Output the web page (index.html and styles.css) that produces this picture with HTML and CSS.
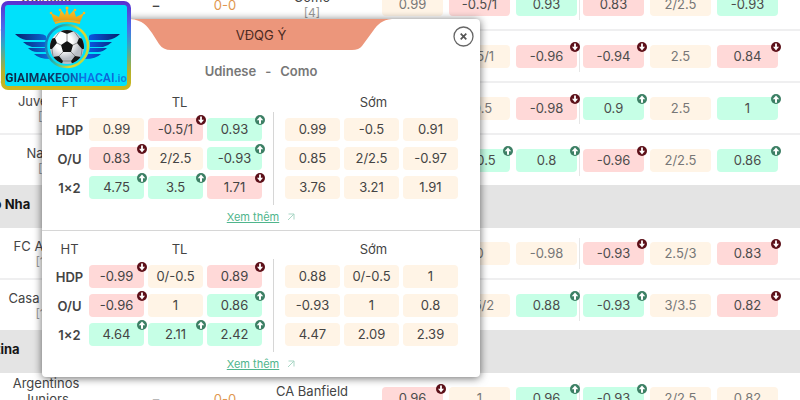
FILE: index.html
```html
<!DOCTYPE html>
<html lang="vi">
<head>
<meta charset="utf-8">
<title>VĐQG Ý</title>
<link rel="stylesheet" href="styles.css">
</head>
<body>
<svg class="defs" aria-hidden="true">
  <symbol id="down" viewBox="0 0 10 10"><circle cx="5" cy="5" r="5" fill="#5c1019"/><path d="M5 1.500V6" stroke="#fff" stroke-width="1.800"/><path d="M2 4.800H8L5 8.600Z" fill="#fff"/></symbol>
  <symbol id="up" viewBox="0 0 10 10"><circle cx="5" cy="5" r="5" fill="#3c7f64"/><path d="M5 8.700V4" stroke="#fff" stroke-width="2"/><path d="M1.700 5.200H8.300L5 1.400Z" fill="#fff"/></symbol>
  <symbol id="out" viewBox="0 0 8 8"><path d="M1 7L7 1M1.5 1H7V6.5" fill="none" stroke="#a9d6c5" stroke-width="1"/></symbol>
</svg>

<main class="board">
<table class="matches">
<tbody>
<tr class="match"><td class="team">Udinese<small>[9]</small></td><td class="time">–</td><td class="score">0-0</td><td class="team away">Como<small>[4]</small></td>
<td class="odd">0.99</td><td class="odd fall">-0.5/1</td><td class="odd rise">0.93</td><td class="odd fall half">0.83</td><td class="odd">2/2.5</td><td class="odd rise">-0.93</td></tr>
<tr class="match"><td class="team"></td><td class="time"></td><td class="score"></td><td class="team away"></td>
<td class="odd"></td><td class="odd">0.5/1</td><td class="odd fall">-0.96<svg><use href="#down"/></svg></td><td class="odd fall half">-0.94<svg><use href="#down"/></svg></td><td class="odd">2.5</td><td class="odd fall">0.84<svg><use href="#down"/></svg></td></tr>
<tr class="match"><td class="team">Juventus<small>[8]</small></td><td class="time"></td><td class="score"></td><td class="team away"></td>
<td class="odd"></td><td class="odd">-0.5</td><td class="odd fall">-0.98<svg><use href="#down"/></svg></td><td class="odd rise half">0.9<svg><use href="#up"/></svg></td><td class="odd">2.5</td><td class="odd rise">1<svg><use href="#up"/></svg></td></tr>
<tr class="match last"><td class="team">Napoli<small>[2]</small></td><td class="time"></td><td class="score"></td><td class="team away"></td>
<td class="odd"></td><td class="odd rise">0/0.5<svg><use href="#up"/></svg></td><td class="odd rise">0.8<svg><use href="#up"/></svg></td><td class="odd fall half">-0.96<svg><use href="#down"/></svg></td><td class="odd">2/2.5</td><td class="odd rise">0.86<svg><use href="#up"/></svg></td></tr>
<tr class="league"><th scope="rowgroup">Bồ Đào Nha</th></tr>
<tr class="match"><td class="team">FC Arouca<small>[16]</small></td><td class="time"></td><td class="score"></td><td class="team away"></td>
<td class="odd"></td><td class="odd">0</td><td class="odd">-0.98</td><td class="odd fall half">-0.93<svg><use href="#down"/></svg></td><td class="odd">2.5/3</td><td class="odd fall">0.83<svg><use href="#down"/></svg></td></tr>
<tr class="match last"><td class="team">Casa Pia AC<small>[10]</small></td><td class="time"></td><td class="score"></td><td class="team away"></td>
<td class="odd"></td><td class="odd">1.5/2</td><td class="odd rise">0.88<svg><use href="#up"/></svg></td><td class="odd rise half">-0.93<svg><use href="#up"/></svg></td><td class="odd">3/3.5</td><td class="odd fall">0.82<svg><use href="#down"/></svg></td></tr>
<tr class="league"><th scope="rowgroup">Argentina</th></tr>
<tr class="match"><td class="team">Argentinos Juniors<small>[3]</small></td><td class="time">–</td><td class="score">0-0</td><td class="team away">CA Banfield<small>[11]</small></td>
<td class="odd fall">0.96<svg><use href="#down"/></svg></td><td class="odd">1</td><td class="odd rise">0.96<svg><use href="#up"/></svg></td><td class="odd rise half">-0.93<svg><use href="#up"/></svg></td><td class="odd">2/2.5</td><td class="odd">0.82</td></tr>
</tbody>
</table>
</main>

<section class="popup" role="dialog" aria-labelledby="popup-title">
  <header class="popup-head">
    <svg class="tab" viewBox="0 0 262 32" preserveAspectRatio="none" aria-hidden="true"><path d="M0 0C13 1 17 7 22 14L29 25Q33 31 41 31H222Q229 31 232 27L243 12C248 5 252 1 262 0Z" fill="#ec967b"/></svg>
    <h1 id="popup-title">VĐQG Ý</h1>
    <button class="close" type="button" aria-label="Đóng"><svg viewBox="0 0 21 21"><circle cx="10.500" cy="10.500" r="9.500" fill="none" stroke="#666" stroke-width="1.300"/><path d="M7.700 7.700L13.300 13.300M13.300 7.700L7.700 13.300" stroke="#555" stroke-width="1.700"/></svg></button>
  </header>
  <p class="teams"><span>Udinese</span><span>-</span><span>Como</span></p>

  <section class="period">
    <div class="tables">
      <table class="now">
        <thead><tr><th class="label">FT</th><th class="group" colspan="3">TL</th></tr></thead>
        <tbody>
        <tr><th scope="row">HDP</th><td class="odd">0.99</td><td class="odd fall">-0.5/1<svg><use href="#down"/></svg></td><td class="odd rise">0.93<svg><use href="#up"/></svg></td></tr>
        <tr><th scope="row">O/U</th><td class="odd fall">0.83<svg><use href="#down"/></svg></td><td class="odd">2/2.5</td><td class="odd rise">-0.93<svg><use href="#up"/></svg></td></tr>
        <tr><th scope="row">1×2</th><td class="odd rise">4.75<svg><use href="#up"/></svg></td><td class="odd rise">3.5<svg><use href="#up"/></svg></td><td class="odd fall">1.71<svg><use href="#down"/></svg></td></tr>
        </tbody>
      </table>
      <div class="rule"></div>
      <table class="early">
        <thead><tr><th class="group" colspan="3">Sớm</th></tr></thead>
        <tbody>
        <tr><td class="odd">0.99</td><td class="odd">-0.5</td><td class="odd">0.91</td></tr>
        <tr><td class="odd">0.85</td><td class="odd">2/2.5</td><td class="odd">-0.97</td></tr>
        <tr><td class="odd">3.76</td><td class="odd">3.21</td><td class="odd">1.91</td></tr>
        </tbody>
      </table>
    </div>
    <div class="more"><a href="#ft">Xem thêm</a><svg><use href="#out"/></svg></div>
  </section>

  <section class="period">
    <div class="tables">
      <table class="now">
        <thead><tr><th class="label">HT</th><th class="group" colspan="3">TL</th></tr></thead>
        <tbody>
        <tr><th scope="row">HDP</th><td class="odd fall">-0.99<svg><use href="#down"/></svg></td><td class="odd">0/-0.5</td><td class="odd fall">0.89<svg><use href="#down"/></svg></td></tr>
        <tr><th scope="row">O/U</th><td class="odd fall">-0.96<svg><use href="#down"/></svg></td><td class="odd">1</td><td class="odd rise">0.86<svg><use href="#up"/></svg></td></tr>
        <tr><th scope="row">1×2</th><td class="odd rise">4.64<svg><use href="#up"/></svg></td><td class="odd rise">2.11<svg><use href="#up"/></svg></td><td class="odd rise">2.42<svg><use href="#up"/></svg></td></tr>
        </tbody>
      </table>
      <div class="rule"></div>
      <table class="early">
        <thead><tr><th class="group" colspan="3">Sớm</th></tr></thead>
        <tbody>
        <tr><td class="odd">0.88</td><td class="odd">0/-0.5</td><td class="odd">1</td></tr>
        <tr><td class="odd">-0.93</td><td class="odd">1</td><td class="odd">0.8</td></tr>
        <tr><td class="odd">4.47</td><td class="odd">2.09</td><td class="odd">2.39</td></tr>
        </tbody>
      </table>
    </div>
    <div class="more"><a href="#ht">Xem thêm</a><svg><use href="#out"/></svg></div>
  </section>
</section>

<a class="logo" href="#home">
  <svg viewBox="0 0 122 66" aria-hidden="true">
    <defs>
      <linearGradient id="wl" x1="0" x2="1"><stop offset="0" stop-color="#08206b"/><stop offset="1" stop-color="#0b6fe0"/></linearGradient>
      <linearGradient id="wr" x1="0" x2="1"><stop offset="0" stop-color="#0a5df0"/><stop offset="1" stop-color="#08206b"/></linearGradient>
      <linearGradient id="ring" x1="0" x2="1" y2="0.300"><stop offset="0" stop-color="#0a63c8"/><stop offset="0.450" stop-color="#35b9a0"/><stop offset="0.800" stop-color="#e9d72a"/><stop offset="1" stop-color="#c8d83a"/></linearGradient>
      <linearGradient id="gold" x2="0" y2="1"><stop offset="0" stop-color="#ffc928"/><stop offset="1" stop-color="#e79a12"/></linearGradient>
      <radialGradient id="ball" cx="0.400" cy="0.350"><stop offset="0.500" stop-color="#fff"/><stop offset="1" stop-color="#b9bdc4"/></radialGradient>
      <clipPath id="ballclip"><circle cx="62" cy="42" r="17"/></clipPath>
    </defs>
    <path d="M10 29H34Q39 29 41 31V35H21Q15 34 10 29ZM18 37H40V42H27Q22 41 18 37ZM23 43H40L41 47H32Q27 47 23 43ZM29 49H42L45 54Q34 54 29 49Z" fill="url(#wl)"/>
    <path d="M115 29H90Q85 29 84 31V35H103Q110 34 115 29ZM107 37H85V42H98Q103 41 107 37ZM102 43H85L84 47H93Q98 47 102 43ZM96 49H83L80 54Q91 54 96 49Z" fill="url(#wr)"/>
    <circle cx="62" cy="41" r="21" fill="#00e1fb" stroke="url(#ring)" stroke-width="2.500"/>
    <circle cx="62" cy="42" r="17" fill="url(#ball)"/>
    <g clip-path="url(#ballclip)" fill="#151515">
      <path d="M62 36L68 40L66 47H58L56 40ZM55 26L62 29L69 26V22H55ZM44 34L50 33L52 38L47 44L43 44ZM80 34L74 33L72 38L77 44L81 44ZM48 52L54 51L58 56L56 61H48ZM76 52L70 51L66 56L68 61H76Z"/>
      <path d="M62 29V36M56 40L52 38M68 40L72 38M58 47L54 51M66 47L70 51M50 33L55 26M74 33L69 26M47 44L48 52M77 44L76 52M58 56H66" fill="none" stroke="#777" stroke-width="0.800"/>
    </g>
    <path d="M49 17L46 8L54 12L56 5L60 10L62 3L64 10L69 5L71 12L79 8L75 17Q62 13 49 17Z" fill="url(#gold)"/>
    <path d="M50 18Q62 14 75 18" fill="none" stroke="#f6b11b" stroke-width="2"/>
    <g fill="#ffb71c"><circle cx="46" cy="8" r="1.300"/><circle cx="55" cy="5" r="1.300"/><circle cx="62" cy="3" r="1.500"/><circle cx="70" cy="5" r="1.300"/><circle cx="79" cy="8" r="1.300"/></g>
  </svg>
  <span class="brand">GIAIMAKEONHACAI<small>.io</small></span>
</a>
</body>
</html>
```
FILE: styles.css
```css
* { box-sizing: border-box; }

body {
  margin: 0;
  background: #fff;
  color: #444;
  font: 13px/16px Inter, "Open Sans", sans-serif;
}

.defs { position: absolute; width: 0; height: 0; }

table { border-spacing: 0; }
th, td { padding: 0; font-weight: 400; text-align: center; }

/* Match list, scrolled part-way through its first row */
.board { height: 100vh; overflow: hidden; }
.matches { display: block; margin-top: -21px; }
.matches tbody { display: block; }

.match {
  display: grid;
  grid-template-columns: 92px 1fr 46px 122px repeat(6, 61px);
  column-gap: 6px;
  align-items: center;
  height: 52px;
  padding: 1px 22px 0 0;
  border-bottom: 2px solid #efeff0;
}
.match.last { height: 50px; border-bottom: 0; }

.team small { display: block; color: #999; font-size: 12px; }
.away { padding-right: 6px; }
.time { padding-left: 18px; font-weight: 600; }
.score { color: #e0984f; }

.league {
  display: flex;
  align-items: center;
  height: 43px;
  background: #e4e4e4;
}
.league th { margin-left: -43px; padding-bottom: 6px; color: #151515; font-weight: 700; white-space: nowrap; }

/* Odds cells */
.odd {
  position: relative;
  height: 23px;
  border-radius: 4px;
  background: #fff4e6;
  line-height: 23px;
}
.match .odd { color: #777; }
.odd.rise { background: #c6ffe6; }
.odd.fall { background: #ffd9d8; }
.match .rise, .match .fall { color: #4c4c4c; }
.odd svg {
  position: absolute;
  z-index: 1;
  top: -3px;
  right: -3px;
  width: 10px;
  height: 10px;
}
.half::before {
  content: "";
  position: absolute;
  top: -4px;
  bottom: -4px;
  left: -4px;
  border-left: 1px solid #e6e6e6;
}

/* Odds popup */
.popup {
  position: absolute;
  z-index: 2;
  top: 19px;
  left: 42px;
  width: 438px;
  border-radius: 4px;
  background: #fff;
  box-shadow: 0 1px 8px rgba(0, 0, 0, 0.6);
}
.popup-head {
  position: relative;
  display: flex;
  justify-content: center;
  height: 32px;
}
.tab { position: absolute; top: 0; left: 88px; width: 262px; height: 32px; }
.popup h1 {
  position: relative;
  margin: 0;
  color: #4a2a22;
  font-size: 13px;
  font-weight: 400;
  line-height: 32px;
}
.close {
  position: absolute;
  top: 7px;
  right: 6px;
  width: 21px;
  height: 21px;
  padding: 0;
  border: 0;
  background: none;
}
.close svg { display: block; }

.teams {
  display: flex;
  justify-content: center;
  gap: 9px;
  margin: 0;
  height: 33px;
  padding-top: 12px;
  color: #777;
  font-weight: 600;
}

.period + .period { border-top: 1px solid #d6d6d6; }
.tables { display: flex; padding-left: 8px; }
.tables table { border-spacing: 4px 6px; table-layout: fixed; }
.now { width: 216px; }
.early { width: 181px; }
.now .label { width: 31px; }
.tables thead th { height: 22px; padding-top: 2px; }
.now .group { padding-left: 8px; }
.early .group { padding-left: 4px; }
.tables tbody th { font-weight: 600; white-space: nowrap; }
.rule { margin: 28px 7px 0; border-left: 1px solid #d6d6d6; }

.more {
  display: flex;
  align-items: center;
  justify-content: center;
  gap: 8px;
  height: 25px;
  padding-bottom: 2px;
}
.more a { color: #4fb58c; font-size: 11px; }
.more svg { width: 8px; height: 8px; }

/* Site logo */
.logo {
  position: absolute;
  z-index: 3;
  top: 1px;
  left: 1px;
  display: flex;
  flex-direction: column;
  align-items: center;
  width: 130px;
  height: 89px;
  border: 4px solid transparent;
  border-radius: 7px;
  background:
    linear-gradient(#00e1fb, #00e1fb) padding-box,
    linear-gradient(#5b2fd0, #4b6be8 30%, #35a6c0 50%, #b5b02a 80%, #cdb81c) border-box;
  text-decoration: none;
}
.logo svg { width: 122px; height: 66px; }
.brand {
  background: linear-gradient(90deg, #0a2340, #0d3c6e 45%, #0b78e8 65%, #0a63d8 85%, #0a8fe0);
  background-clip: text;
  -webkit-background-clip: text;
  color: transparent;
  font: 700 12px/14px Roboto, sans-serif;
}
.brand small { font-size: 11px; }
```
